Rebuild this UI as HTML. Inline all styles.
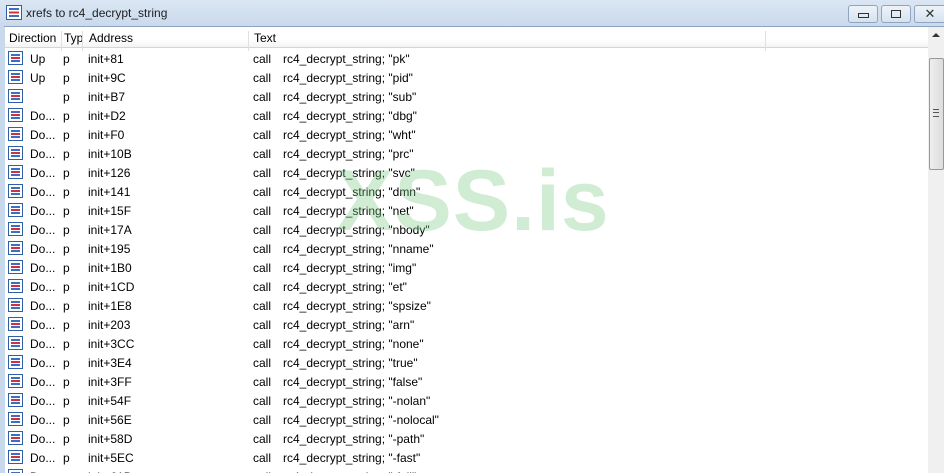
<!DOCTYPE html>
<html style="overflow:hidden;height:473px"><head><style>
body{margin:0;width:944px;height:473px;overflow:hidden;background:#fff;font-family:"Liberation Sans",Arial,sans-serif;font-size:12px;color:#000;position:relative}
.title{position:absolute;left:0;top:0;width:944px;height:27px;background:linear-gradient(#dbe6f3,#c9d9ec);}
.title span{position:absolute;left:26px;top:6px;font-size:12px;color:#1e1e1e}
.frame{position:absolute;left:0;top:26px;width:5px;height:447px;background:#c9d9ec}
.frameT{position:absolute;left:4px;top:26px;width:940px;height:1px;background:#8ea4bf}
.btn{position:absolute;top:5px;height:16px;border:1px solid #8ea4bf;border-radius:3px;background:linear-gradient(#eef3f9,#d6e2f0)}
.hdr{position:absolute;left:5px;top:27px;width:923px;height:20px;background:linear-gradient(#fff,#fff 60%,#f3f4f6);border-bottom:1px solid #d5d5d5}
.hdr div{position:absolute;top:4px}
.sep{position:absolute;top:0;width:1px;height:20px;background:#e0e0e0}
.rows{position:absolute;left:0;top:0;width:928px;height:473px;overflow:hidden}
.row{position:absolute;left:5px;height:19px;width:923px}
.row span{position:absolute;top:3px}
.ic{position:absolute;left:3px;top:2px;width:13px;height:12px;border:1px solid #2f5fa6;background:#fff}
.ic:before{content:"";position:absolute;left:2px;top:2px;width:9px;height:2px;background:#3a6fc2;box-shadow:0 3px 0 #d03040,0 6px 0 #3a6fc2}
.sb{position:absolute;left:928px;top:27px;width:16px;height:446px;background:#f0f0f0}
.thumb{position:absolute;left:929px;top:58px;width:13px;height:110px;border:1px solid #999;border-radius:2px;background:linear-gradient(90deg,#eee,#ddd)}
.wm{position:absolute;left:336px;top:152px;font-size:86px;font-weight:bold;color:rgba(120,200,130,.35);letter-spacing:1px}
</style></head><body>
<div class="title"><svg style="position:absolute;left:6px;top:5px" width="16" height="15"><rect x=".5" y=".5" width="15" height="14" fill="#fff" stroke="#2f5fa6"/><path d="M3 4h10M3 7.5h10M3 11h10" stroke="#3a6fc2" stroke-width="2"/><path d="M3 7.5h10" stroke="#d03040" stroke-width="2"/></svg><span>xrefs to rc4_decrypt_string</span>
<div class="btn" style="left:848px;width:28px"><div style="position:absolute;left:9px;top:7px;width:9px;height:3px;border:1px solid #333"></div></div>
<div class="btn" style="left:881px;width:28px"><div style="position:absolute;left:9px;top:4px;width:8px;height:6px;border:1px solid #333"></div></div>
<div class="btn" style="left:914px;width:30px;text-align:center;font-size:13px;line-height:16px;color:#333">✕</div>
</div>
<div class="frame"></div><div class="frameT"></div>
<div class="hdr">
<div style="left:4px">Direction</div><div class="sep" style="left:56px"></div>
<div style="left:59px">Typ</div><div class="sep" style="left:77px"></div>
<div style="left:84px">Address</div><div class="sep" style="left:243px"></div>
<div style="left:249px">Text</div><div class="sep" style="left:760px"></div>
</div>
<div class="rows">
<div class="row" style="top:49px"><i class="ic"></i><span style="left:25px">Up</span><span style="left:58px">p</span><span style="left:83px">init+81</span><span style="left:248px">call</span><span style="left:278px">rc4_decrypt_string; "pk"</span></div>
<div class="row" style="top:68px"><i class="ic"></i><span style="left:25px">Up</span><span style="left:58px">p</span><span style="left:83px">init+9C</span><span style="left:248px">call</span><span style="left:278px">rc4_decrypt_string; "pid"</span></div>
<div class="row" style="top:87px"><i class="ic"></i><span style="left:58px">p</span><span style="left:83px">init+B7</span><span style="left:248px">call</span><span style="left:278px">rc4_decrypt_string; "sub"</span></div>
<div class="row" style="top:106px"><i class="ic"></i><span style="left:25px">Do...</span><span style="left:58px">p</span><span style="left:83px">init+D2</span><span style="left:248px">call</span><span style="left:278px">rc4_decrypt_string; "dbg"</span></div>
<div class="row" style="top:125px"><i class="ic"></i><span style="left:25px">Do...</span><span style="left:58px">p</span><span style="left:83px">init+F0</span><span style="left:248px">call</span><span style="left:278px">rc4_decrypt_string; "wht"</span></div>
<div class="row" style="top:144px"><i class="ic"></i><span style="left:25px">Do...</span><span style="left:58px">p</span><span style="left:83px">init+10B</span><span style="left:248px">call</span><span style="left:278px">rc4_decrypt_string; "prc"</span></div>
<div class="row" style="top:163px"><i class="ic"></i><span style="left:25px">Do...</span><span style="left:58px">p</span><span style="left:83px">init+126</span><span style="left:248px">call</span><span style="left:278px">rc4_decrypt_string; "svc"</span></div>
<div class="row" style="top:182px"><i class="ic"></i><span style="left:25px">Do...</span><span style="left:58px">p</span><span style="left:83px">init+141</span><span style="left:248px">call</span><span style="left:278px">rc4_decrypt_string; "dmn"</span></div>
<div class="row" style="top:201px"><i class="ic"></i><span style="left:25px">Do...</span><span style="left:58px">p</span><span style="left:83px">init+15F</span><span style="left:248px">call</span><span style="left:278px">rc4_decrypt_string; "net"</span></div>
<div class="row" style="top:220px"><i class="ic"></i><span style="left:25px">Do...</span><span style="left:58px">p</span><span style="left:83px">init+17A</span><span style="left:248px">call</span><span style="left:278px">rc4_decrypt_string; "nbody"</span></div>
<div class="row" style="top:239px"><i class="ic"></i><span style="left:25px">Do...</span><span style="left:58px">p</span><span style="left:83px">init+195</span><span style="left:248px">call</span><span style="left:278px">rc4_decrypt_string; "nname"</span></div>
<div class="row" style="top:258px"><i class="ic"></i><span style="left:25px">Do...</span><span style="left:58px">p</span><span style="left:83px">init+1B0</span><span style="left:248px">call</span><span style="left:278px">rc4_decrypt_string; "img"</span></div>
<div class="row" style="top:277px"><i class="ic"></i><span style="left:25px">Do...</span><span style="left:58px">p</span><span style="left:83px">init+1CD</span><span style="left:248px">call</span><span style="left:278px">rc4_decrypt_string; "et"</span></div>
<div class="row" style="top:296px"><i class="ic"></i><span style="left:25px">Do...</span><span style="left:58px">p</span><span style="left:83px">init+1E8</span><span style="left:248px">call</span><span style="left:278px">rc4_decrypt_string; "spsize"</span></div>
<div class="row" style="top:315px"><i class="ic"></i><span style="left:25px">Do...</span><span style="left:58px">p</span><span style="left:83px">init+203</span><span style="left:248px">call</span><span style="left:278px">rc4_decrypt_string; "arn"</span></div>
<div class="row" style="top:334px"><i class="ic"></i><span style="left:25px">Do...</span><span style="left:58px">p</span><span style="left:83px">init+3CC</span><span style="left:248px">call</span><span style="left:278px">rc4_decrypt_string; "none"</span></div>
<div class="row" style="top:353px"><i class="ic"></i><span style="left:25px">Do...</span><span style="left:58px">p</span><span style="left:83px">init+3E4</span><span style="left:248px">call</span><span style="left:278px">rc4_decrypt_string; "true"</span></div>
<div class="row" style="top:372px"><i class="ic"></i><span style="left:25px">Do...</span><span style="left:58px">p</span><span style="left:83px">init+3FF</span><span style="left:248px">call</span><span style="left:278px">rc4_decrypt_string; "false"</span></div>
<div class="row" style="top:391px"><i class="ic"></i><span style="left:25px">Do...</span><span style="left:58px">p</span><span style="left:83px">init+54F</span><span style="left:248px">call</span><span style="left:278px">rc4_decrypt_string; "-nolan"</span></div>
<div class="row" style="top:410px"><i class="ic"></i><span style="left:25px">Do...</span><span style="left:58px">p</span><span style="left:83px">init+56E</span><span style="left:248px">call</span><span style="left:278px">rc4_decrypt_string; "-nolocal"</span></div>
<div class="row" style="top:429px"><i class="ic"></i><span style="left:25px">Do...</span><span style="left:58px">p</span><span style="left:83px">init+58D</span><span style="left:248px">call</span><span style="left:278px">rc4_decrypt_string; "-path"</span></div>
<div class="row" style="top:448px"><i class="ic"></i><span style="left:25px">Do...</span><span style="left:58px">p</span><span style="left:83px">init+5EC</span><span style="left:248px">call</span><span style="left:278px">rc4_decrypt_string; "-fast"</span></div>
<div class="row" style="top:467px"><i class="ic"></i><span style="left:25px">Do...</span><span style="left:58px">p</span><span style="left:83px">init+61B</span><span style="left:248px">call</span><span style="left:278px">rc4_decrypt_string; "-full"</span></div>
</div>
<div class="wm">XSS.is</div>
<div class="sb"></div>
<div style="position:absolute;left:932px;top:33px;width:0;height:0;border:4px solid transparent;border-bottom:4px solid #333;border-top:0"></div>
<div class="thumb"><div style="position:absolute;left:3px;top:50px;width:6px;height:6px;border-top:1px solid #555;border-bottom:1px solid #555"><div style="margin-top:2px;border-top:1px solid #555"></div></div></div>
</body></html>
